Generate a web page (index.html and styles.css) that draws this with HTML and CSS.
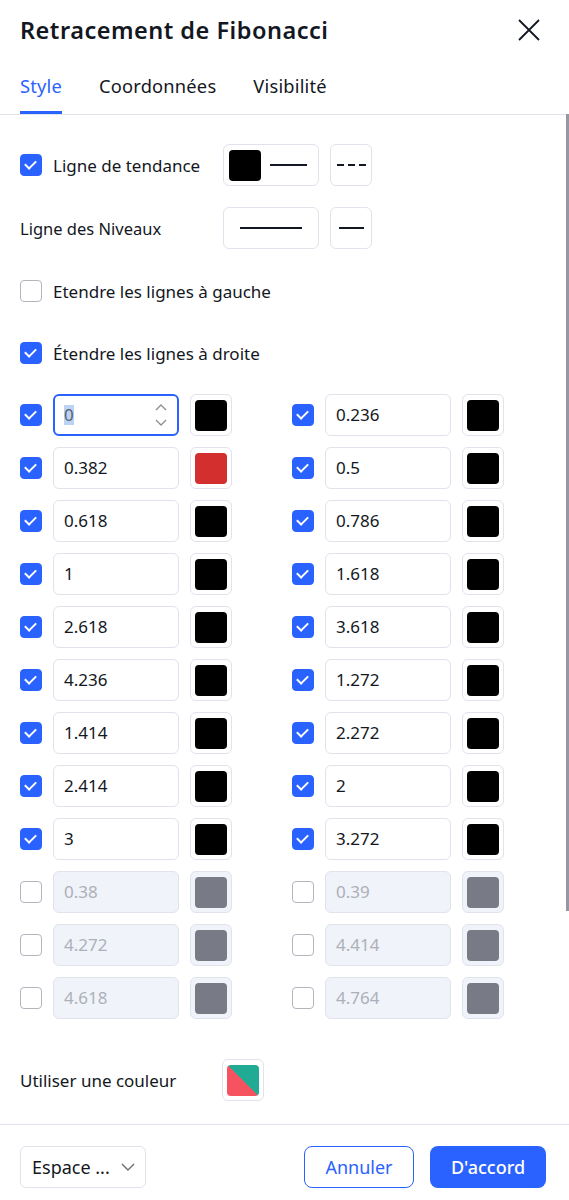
FILE: index.html
```html
<!DOCTYPE html>
<html lang="fr">
  <head>
    <meta charset="UTF-8" />
    <meta name="viewport" content="width=device-width, initial-scale=1.0" />
    <link rel="stylesheet" href="styles.css">
  </head>
  <body>
    <div class="dialog">
      <div class="header">
        <h1 class="title">Retracement de Fibonacci</h1>
        <button class="close" type="button">
          <svg width="24" height="24" viewBox="0 0 24 24"><path d="M2 2L22 22M22 2L2 22" stroke="#131722" stroke-width="1.8" fill="none"/></svg>
        </button>
      </div>

      <div class="tabs">
        <span class="tab active">Style</span>
        <span class="tab">Coordonnées</span>
        <span class="tab">Visibilité</span>
      </div>

      <div class="content">
        <div class="scroll-thumb"></div>

        <div class="prop-row">
          <label class="check-label"><span class="cb on"></span>Ligne de tendance</label>
          <div class="box wide"><span class="swatch black"></span><span class="line short"></span></div>
          <div class="box square"><span class="dashes"></span></div>
        </div>

        <div class="prop-row">
          <span class="plain-label">Ligne des Niveaux</span>
          <div class="box wide"><span class="line long"></span></div>
          <div class="box square"><span class="line tiny"></span></div>
        </div>

        <div class="toggle-row">
          <label class="check-label"><span class="cb"></span>Etendre les lignes à gauche</label>
        </div>

        <div class="toggle-row">
          <label class="check-label"><span class="cb on"></span>Étendre les lignes à droite</label>
        </div>

        <div class="levels">
          <div class="level"><span class="cb on"></span><div class="num focused"><span class="sel">0</span><span class="spin"><svg width="14" height="26" viewBox="0 0 14 26"><path d="M2 8L7 3L12 8M2 18L7 23L12 18" stroke="#8a8d96" stroke-width="1.3" fill="none"/></svg></span></div><div class="color"><span class="swatch black"></span></div></div>
          <div class="level"><span class="cb on"></span><div class="num">0.236</div><div class="color"><span class="swatch black"></span></div></div>
          <div class="level"><span class="cb on"></span><div class="num">0.382</div><div class="color"><span class="swatch red"></span></div></div>
          <div class="level"><span class="cb on"></span><div class="num">0.5</div><div class="color"><span class="swatch black"></span></div></div>
          <div class="level"><span class="cb on"></span><div class="num">0.618</div><div class="color"><span class="swatch black"></span></div></div>
          <div class="level"><span class="cb on"></span><div class="num">0.786</div><div class="color"><span class="swatch black"></span></div></div>
          <div class="level"><span class="cb on"></span><div class="num">1</div><div class="color"><span class="swatch black"></span></div></div>
          <div class="level"><span class="cb on"></span><div class="num">1.618</div><div class="color"><span class="swatch black"></span></div></div>
          <div class="level"><span class="cb on"></span><div class="num">2.618</div><div class="color"><span class="swatch black"></span></div></div>
          <div class="level"><span class="cb on"></span><div class="num">3.618</div><div class="color"><span class="swatch black"></span></div></div>
          <div class="level"><span class="cb on"></span><div class="num">4.236</div><div class="color"><span class="swatch black"></span></div></div>
          <div class="level"><span class="cb on"></span><div class="num">1.272</div><div class="color"><span class="swatch black"></span></div></div>
          <div class="level"><span class="cb on"></span><div class="num">1.414</div><div class="color"><span class="swatch black"></span></div></div>
          <div class="level"><span class="cb on"></span><div class="num">2.272</div><div class="color"><span class="swatch black"></span></div></div>
          <div class="level"><span class="cb on"></span><div class="num">2.414</div><div class="color"><span class="swatch black"></span></div></div>
          <div class="level"><span class="cb on"></span><div class="num">2</div><div class="color"><span class="swatch black"></span></div></div>
          <div class="level"><span class="cb on"></span><div class="num">3</div><div class="color"><span class="swatch black"></span></div></div>
          <div class="level"><span class="cb on"></span><div class="num">3.272</div><div class="color"><span class="swatch black"></span></div></div>
          <div class="level off"><span class="cb"></span><div class="num">0.38</div><div class="color"><span class="swatch gray"></span></div></div>
          <div class="level off"><span class="cb"></span><div class="num">0.39</div><div class="color"><span class="swatch gray"></span></div></div>
          <div class="level off"><span class="cb"></span><div class="num">4.272</div><div class="color"><span class="swatch gray"></span></div></div>
          <div class="level off"><span class="cb"></span><div class="num">4.414</div><div class="color"><span class="swatch gray"></span></div></div>
          <div class="level off"><span class="cb"></span><div class="num">4.618</div><div class="color"><span class="swatch gray"></span></div></div>
          <div class="level off"><span class="cb"></span><div class="num">4.764</div><div class="color"><span class="swatch gray"></span></div></div>
        </div>

        <div class="prop-row single">
          <span class="plain-label wide-text">Utiliser une couleur</span>
          <div class="color"><span class="swatch split"></span></div>
        </div>
      </div>

      <div class="footer">
        <div class="select">Espace ...
          <svg width="14" height="8" viewBox="0 0 14 8"><path d="M1 1L7 7L13 1" stroke="#6a6d78" stroke-width="1.4" fill="none"/></svg>
        </div>
        <div class="buttons">
          <button class="btn ghost" type="button">Annuler</button>
          <button class="btn primary" type="button">D'accord</button>
        </div>
      </div>
    </div>
  </body>
</html>
```

FILE: styles.css
```css
body {
  margin: 0;
  font-family: "Noto Sans", "DejaVu Sans", sans-serif;
  color: #131722;
  background: #fff;
}
.dialog {
  width: 569px;
  height: 1200px;
  background: #fff;
  display: flex;
  flex-direction: column;
  overflow: hidden;
}
.header {
  flex: none;
  display: flex;
  align-items: center;
  justify-content: space-between;
  height: 60px;
  padding: 0 28px 0 20px;
}
.title {
  margin: 0;
  font-size: 23.5px;
  font-weight: 600;
  letter-spacing: 0.5px;
}
.close {
  border: none;
  background: none;
  padding: 0;
  width: 24px;
  height: 24px;
}
.tabs {
  flex: none;
  display: flex;
  gap: 37px;
  padding: 0 20px;
  height: 54px;
  border-bottom: 1px solid #e0e3eb;
}
.tab {
  font-size: 18.3px;
  line-height: 50px;
  padding-top: 1px;
  color: #131722;
  border-bottom: 3px solid transparent;
  letter-spacing: 0.2px;
}
.tab.active {
  color: #2962ff;
  border-bottom-color: #2962ff;
}
.content {
  position: relative;
  flex: 1;
  min-height: 0;
  padding: 29px 20px 0;
  border-bottom: 1px solid #e0e3eb;
}
.scroll-thumb {
  position: absolute;
  right: 0;
  top: -1px;
  width: 3px;
  height: 797px;
  background: #9598a1;
}
.prop-row {
  display: grid;
  grid-template-columns: 192px 96px 42px;
  column-gap: 11px;
  align-items: center;
  margin-bottom: 21px;
}
.prop-row.single {
  grid-template-columns: 191px 42px;
  margin-top: 40px;
}
.check-label {
  display: flex;
  align-items: center;
  gap: 11px;
  font-size: 17px;
}
.plain-label {
  font-size: 16.5px;
}
.plain-label.wide-text {
  font-size: 17px;
}
.toggle-row {
  height: 42px;
  display: flex;
  align-items: center;
  margin-bottom: 20px;
}
.cb {
  width: 20px;
  height: 20px;
  border: 1px solid #b2b5be;
  border-radius: 4px;
  flex: none;
  position: relative;
}
.cb.on {
  background: #2962ff;
  border-color: #2962ff;
}
.cb.on::after {
  content: "";
  position: absolute;
  left: 6px;
  top: 3px;
  width: 5px;
  height: 9px;
  border-right: 2px solid #fff;
  border-bottom: 2px solid #fff;
  transform: rotate(45deg);
}
.box {
  height: 40px;
  border: 1px solid #e0e3eb;
  border-radius: 6px;
  display: flex;
  align-items: center;
  justify-content: center;
}
.box.wide {
  justify-content: flex-start;
  padding-left: 5px;
  gap: 9px;
}
.box.square {
  width: 40px;
}
.line {
  display: block;
  height: 2px;
  background: #131722;
}
.line.short {
  width: 37px;
}
.line.long {
  width: 62px;
  margin-left: 11px;
}
.line.tiny {
  width: 25px;
}
.dashes {
  display: block;
  width: 29px;
  height: 2px;
  background: repeating-linear-gradient(90deg, #131722 0 7px, transparent 7px 11px);
}
.swatch {
  display: block;
  width: 32px;
  height: 31px;
  border-radius: 4px;
}
.black {
  background: #000;
}
.red {
  background: #d32f2f;
}
.gray {
  background: #787b86;
}
.split {
  background: linear-gradient(to top right, #f7525f 50%, #22ab94 50%);
}
.levels {
  display: grid;
  grid-template-columns: 212px 212px;
  column-gap: 60px;
  row-gap: 11px;
  margin-top: 4px;
}
.level {
  display: flex;
  align-items: center;
  height: 42px;
}
.level .cb {
  margin-right: 11px;
}
.num {
  box-sizing: border-box;
  width: 126px;
  height: 42px;
  border: 1px solid #e0e3eb;
  border-radius: 6px;
  padding-left: 10px;
  font-size: 17px;
  line-height: 40px;
  display: flex;
  align-items: center;
  margin-right: 11px;
}
.num.focused {
  border: 2px solid #2962ff;
  padding-left: 9px;
  justify-content: space-between;
  padding-right: 9px;
}
.sel {
  background: #bbd3f5;
  color: #5a6270;
  line-height: 20px;
}
.spin {
  display: flex;
}
.color {
  box-sizing: border-box;
  width: 42px;
  height: 42px;
  border: 1px solid #e0e3eb;
  border-radius: 6px;
  display: flex;
  align-items: center;
  justify-content: center;
}
.level.off .num {
  background: #f0f3fa;
  color: #adb0b8;
}
.level.off .color {
  background: #f0f3fa;
}
.footer {
  flex: none;
  box-sizing: border-box;
  height: 75px;
  display: flex;
  align-items: flex-start;
  justify-content: space-between;
  padding: 21px 23px 0 20px;
}
.select {
  box-sizing: border-box;
  width: 126px;
  height: 42px;
  border: 1px solid #e0e3eb;
  border-radius: 6px;
  display: flex;
  align-items: center;
  justify-content: space-between;
  padding: 0 10px 0 11px;
  font-size: 18px;
}
.buttons {
  display: flex;
  gap: 16px;
}
.btn {
  height: 42px;
  border-radius: 8px;
  font-family: inherit;
  font-size: 18px;
  padding: 0;
}
.btn.ghost {
  width: 110px;
  background: #fff;
  border: 1px solid #2962ff;
  color: #2962ff;
}
.btn.primary {
  width: 116px;
  background: #2962ff;
  border: none;
  color: #fff;
  font-weight: 500;
}
```
